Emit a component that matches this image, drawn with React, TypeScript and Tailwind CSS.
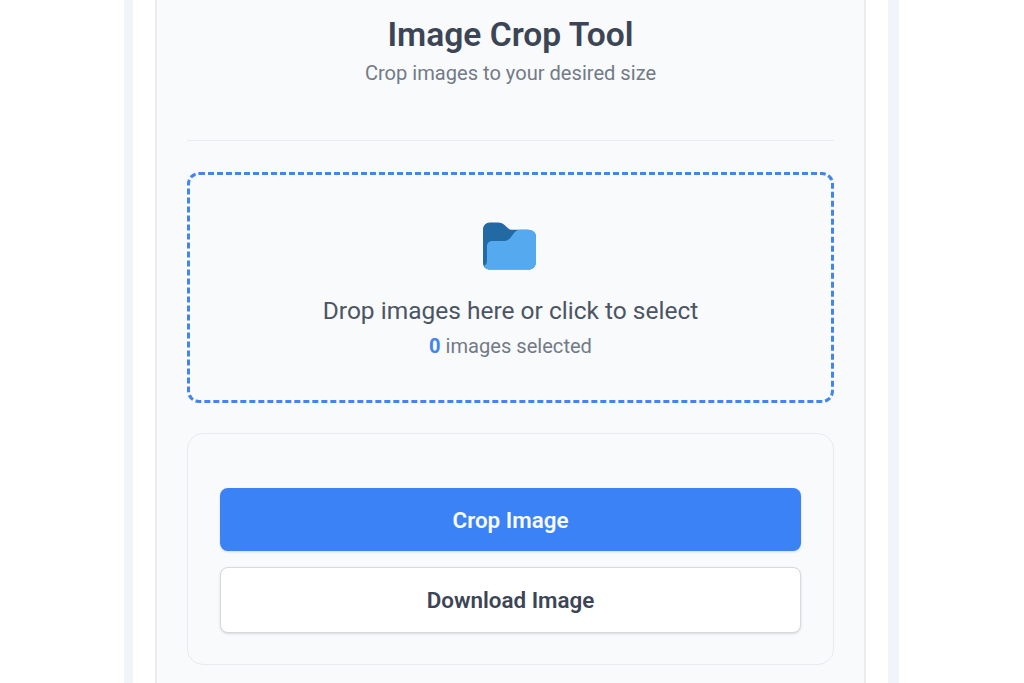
export default function App() {
  return (
    <div className="h-[683px] w-[1024px] overflow-hidden bg-white font-['Roboto',sans-serif]">
      <div className="ml-[124px] h-full w-[775px] bg-[#f1f5f9] pr-[11px] pl-[9px]">
        <div className="h-full bg-white pr-[22px] pl-[22px]">
          <div className="h-full border-x-2 border-[#eaecf0] bg-[#f8fafc] px-[30px] pt-[15px]">
            <div className="border-b border-[#e8ebef] pb-[54px] text-center">
              <h1 className="text-[33.6px] leading-[40px] font-semibold text-[#3b4555]">Image Crop Tool</h1>
              <p className="mt-[5px] text-[20.1px] leading-[26px] text-[#737a87]">Crop images to your desired size</p>
            </div>
            <div className="mt-[31px] flex h-[231px] flex-col items-center rounded-xl border-[3px] border-dashed border-[#4285ec] pt-[47px]">
              <svg width="53" height="48" viewBox="0 0 54 48" aria-hidden="true" className="mr-[3px]">
                <path d="M7 0H15c3.500 0 5.500 1 7.500 3l3 3c1.500 1.200 2.500 1.500 4 1.500H46c4.500 0 8 3 8 7.500V40c0 4.500-3 8-8 8H7c-4 0-7-3-7-7V7c0-4 3-7 7-7z" fill="#2369a3" />
                <path d="M10 19H20c3.500 0 6-1 8-3.500l3-4c2-2.500 4-4 7-4H46c4.500 0 8 3 8 7.500V40c0 4.500-3 8-8 8H8c-3.500 0-6-1.500-7-4c2-.500 3-2 3-5V25c0-4 2-6 6-6z" fill="#54a9ef" />
              </svg>
              <p className="mt-[25px] text-[24.5px] leading-[32px] text-[#4b5563]">Drop images here or click to select</p>
              <p className="mt-[6px] text-[20.1px] leading-[26px] text-[#737a87]">
                <span className="font-bold text-[#4285ec]">0</span> images selected
              </p>
            </div>
            <div className="mt-[30px] flex h-[232px] flex-col gap-4 rounded-2xl border border-[#e8eaee] px-[32px] pt-[54px]">
              <button className="h-[63px] rounded-lg bg-[#3b82f6] pt-[2px] text-[22.4px] font-semibold text-[#f8fafc] shadow-sm">Crop Image</button>
              <button className="h-[66px] rounded-lg border border-[#d6d9de] bg-white pt-[2px] text-[22.4px] font-semibold text-[#3b4555] shadow-sm">Download Image</button>
            </div>
          </div>
        </div>
      </div>
    </div>
  );
}
